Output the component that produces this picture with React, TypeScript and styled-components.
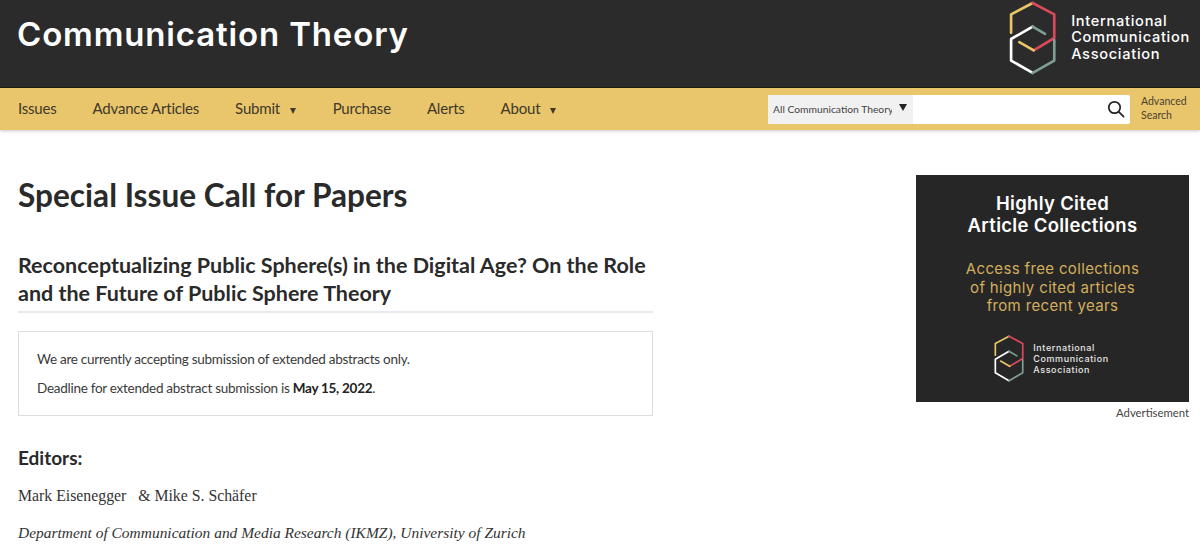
import React from "react";
import styled, { createGlobalStyle } from "styled-components";

const Global = createGlobalStyle`
  html, body { margin: 0; padding: 0; background: #fff; }
  body { font-family: "Lato", "Noto Sans", sans-serif; color: #2a2a2a; overflow: hidden; }
`;

const Logo = ({ size }: { size: number }) => (
  <svg width={size * 0.64} height={size} viewBox="1 0 46 72" fill="none" strokeWidth={2.6} strokeLinejoin="round" strokeLinecap="round">
    <path d="M3 31 V13 L24 2" stroke="#e8c566" />
    <path d="M24 2 L45 13 V36 L25 48" stroke="#d9495b" />
    <path d="M25 48 L11 40" stroke="#e8c566" />
    <path d="M24 25 L3 37 V58 L24 70" stroke="#ffffff" />
    <path d="M24 70 L45 58 V38" stroke="#7f9f93" />
    <path d="M24 25 L36 32" stroke="#7f9f93" />
  </svg>
);

const App = () => {
  return (
    <>
      <Global />
      <Header>
        <SiteTitle>Communication Theory</SiteTitle>
        <Brand>
          <Logo size={74} />
          <BrandName>
            International
            <br />
            Communication
            <br />
            Association
          </BrandName>
        </Brand>
      </Header>
      <NavBar>
        <NavLinks>
          <NavLink>Issues</NavLink>
          <NavLink>Advance Articles</NavLink>
          <NavLink>
            Submit <Caret />
          </NavLink>
          <NavLink>Purchase</NavLink>
          <NavLink>Alerts</NavLink>
          <NavLink>
            About <Caret />
          </NavLink>
        </NavLinks>
        <SearchArea>
          <SearchBox>
            <Scope>
              <ScopeText>All Communication Theory</ScopeText>
              <ScopeCaret />
            </Scope>
            <SearchField />
            <SearchButton>
              <svg width="18" height="18" viewBox="0 0 18 18" fill="none" stroke="#222" strokeWidth="1.7">
                <circle cx="7.5" cy="7.5" r="5.7" />
                <path d="M11.8 11.8 L16.6 16.6" strokeLinecap="round" />
              </svg>
            </SearchButton>
          </SearchBox>
          <AdvancedLink>
            Advanced
            <br />
            Search
          </AdvancedLink>
        </SearchArea>
      </NavBar>
      <Page>
        <Main>
          <PageTitle>Special Issue Call for Papers</PageTitle>
          <SubTitle>Reconceptualizing Public Sphere(s) in the Digital Age? On the Role and the Future of Public Sphere Theory</SubTitle>
          <Notice>
            <NoticeLine>We are currently accepting submission of extended abstracts only.</NoticeLine>
            <NoticeLine>
              Deadline for extended abstract submission is <strong>May 15, 2022</strong>.
            </NoticeLine>
          </Notice>
          <EditorsHeading>Editors:</EditorsHeading>
          <EditorNames>Mark Eisenegger&nbsp;&nbsp; &amp; Mike S. Schäfer</EditorNames>
          <Affiliation>Department of Communication and Media Research (IKMZ), University of Zurich</Affiliation>
        </Main>
        <Aside>
          <Ad>
            <AdTitle>
              Highly Cited
              <br />
              Article Collections
            </AdTitle>
            <AdText>
              Access free collections
              <br />
              of highly cited articles
              <br />
              from recent years
            </AdText>
            <AdBrand>
              <Logo size={47} />
              <AdBrandName>
                International
                <br />
                Communication
                <br />
                Association
              </AdBrandName>
            </AdBrand>
          </Ad>
          <AdLabel>Advertisement</AdLabel>
        </Aside>
      </Page>
    </>
  );
};

export default App;

const Header = styled.header`
  height: 87px;
  background: #2b2b2b;
  border-bottom: 1px solid #1d1b12;
  display: flex;
  align-items: center;
  justify-content: space-between;
  padding: 0 10px 0 17px;
`;

const SiteTitle = styled.div`
  font-family: "Inter", "Roboto", sans-serif;
  font-size: 33px;
  font-weight: 600;
  letter-spacing: 0.85px;
  color: #fff;
  margin-top: -19px;
`;

const Brand = styled.div`
  display: flex;
  align-items: center;
  gap: 15px;
  margin-top: -12px;
`;

const BrandName = styled.div`
  font-family: "Inter", "Roboto", sans-serif;
  font-size: 14.6px;
  font-weight: 500;
  line-height: 16.5px;
  letter-spacing: 0.7px;
  color: #fff;
`;

const NavBar = styled.nav`
  height: 42px;
  background: #e9c66b;
  box-shadow: 0 1px 3px rgba(0, 0, 0, 0.22);
  display: flex;
  align-items: center;
  justify-content: space-between;
  padding: 0 13px 0 18px;
`;

const NavLinks = styled.div`
  display: flex;
  gap: 36px;
  margin-top: -2px;
`;

const NavLink = styled.a`
  font-size: 15px;
  letter-spacing: -0.2px;
  color: #40382a;
`;

const Caret = styled.span`
  display: inline-block;
  width: 0;
  height: 0;
  margin: 0 1px 0 6px;
  border-left: 3.5px solid transparent;
  border-right: 3.5px solid transparent;
  border-top: 6px solid #40382a;
  vertical-align: 0;
`;

const SearchArea = styled.div`
  display: flex;
  align-items: center;
  gap: 11px;
`;

const SearchBox = styled.div`
  width: 362px;
  height: 29px;
  display: flex;
  align-items: center;
  background: #fff;
  border-radius: 2px;
`;

const Scope = styled.div`
  width: 145px;
  height: 100%;
  flex: none;
  display: flex;
  align-items: center;
  background: #f1f1f1;
  padding-left: 5px;
  box-sizing: border-box;
`;

const ScopeText = styled.span`
  width: 119px;
  overflow: hidden;
  white-space: nowrap;
  font-size: 10.3px;
  color: #444;
`;

const ScopeCaret = styled.span`
  width: 0;
  height: 0;
  margin: -3px 0 0 7px;
  border-left: 4.5px solid transparent;
  border-right: 4.5px solid transparent;
  border-top: 7px solid #222;
`;

const SearchField = styled.div`
  flex: 1;
`;

const SearchButton = styled.div`
  display: flex;
  padding-right: 5px;
`;

const AdvancedLink = styled.a`
  width: 46px;
  margin-top: -2px;
  font-size: 10.5px;
  line-height: 14px;
  color: #4a4232;
`;

const Page = styled.div`
  display: flex;
  justify-content: space-between;
  padding: 0 11px 0 18px;
`;

const Main = styled.main`
  width: 635px;
`;

const PageTitle = styled.h1`
  font-size: 31.6px;
  font-weight: 700;
  line-height: 38px;
  margin: 46px 0 0;
  color: #2a2a2a;
`;

const SubTitle = styled.h2`
  font-size: 21.5px;
  font-weight: 700;
  line-height: 28px;
  margin: 37px 0 0;
  padding-bottom: 4px;
  border-bottom: 2px solid #e9e9f0;
  color: #2a2a2a;
`;

const Notice = styled.div`
  margin-top: 18px;
  height: 85px;
  box-sizing: border-box;
  border: 1px solid #dcdce2;
  padding: 17px 18px 0;
`;

const NoticeLine = styled.p`
  font-size: 13.5px;
  letter-spacing: -0.27px;
  line-height: 20px;
  margin: 0 0 9px;
  color: #3a3a3a;

  strong {
    color: #222;
  }
`;

const EditorsHeading = styled.h3`
  font-size: 19px;
  font-weight: 700;
  line-height: 24px;
  margin: 30px 0 0;
`;

const EditorNames = styled.p`
  font-family: "Liberation Serif", serif;
  font-size: 15.8px;
  line-height: 20px;
  margin: 16px 0 0;
  color: #333;
`;

const Affiliation = styled.p`
  font-family: "Liberation Serif", serif;
  font-style: italic;
  font-size: 15.46px;
  line-height: 20px;
  margin: 17px 0 0;
  color: #333;
`;

const Aside = styled.aside`
  width: 273px;
  padding-top: 45px;
`;

const Ad = styled.div`
  height: 227px;
  background: #262626;
  display: flex;
  flex-direction: column;
  align-items: center;
  text-align: center;
  padding-top: 17px;
  box-sizing: border-box;
`;

const AdTitle = styled.div`
  font-family: "Inter", "Roboto", sans-serif;
  font-size: 18.5px;
  font-weight: 600;
  line-height: 22px;
  letter-spacing: 0.3px;
  color: #fff;
`;

const AdText = styled.div`
  font-family: "Inter", "Roboto", sans-serif;
  font-size: 15px;
  line-height: 18.7px;
  letter-spacing: 0.35px;
  color: #d3ae5c;
  margin-top: 24px;
`;

const AdBrand = styled.div`
  display: flex;
  align-items: center;
  gap: 9px;
  margin-top: 19px;
  margin-left: -2px;
`;

const AdBrandName = styled.div`
  font-family: "Inter", "Roboto", sans-serif;
  font-size: 9px;
  font-weight: 500;
  line-height: 11px;
  letter-spacing: 0.6px;
  text-align: left;
  color: #e6e6e6;
`;

const AdLabel = styled.div`
  font-size: 11.3px;
  line-height: 14px;
  margin-top: 4px;
  text-align: right;
  color: #444;
`;
